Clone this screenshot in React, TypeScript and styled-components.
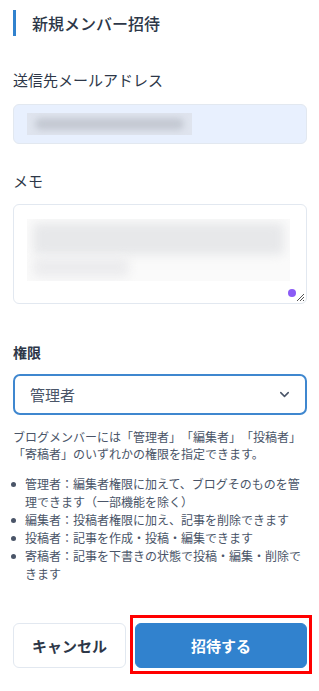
import React from "react"
import styled, {createGlobalStyle} from "styled-components"
import {ChevronDown} from "lucide-react"

const GlobalStyle = createGlobalStyle`
  body {
    margin: 0;
    background: #fff;
    font-family: "Noto Sans CJK JP", "Noto Sans", sans-serif;
    color: #2d3748;
    text-spacing-trim: space-all;
  }
`

const Page = styled.div`
  width: 319px;
  box-sizing: border-box;
  padding: 10px 12px 0 13px;
  display: flex;
  flex-direction: column;
`

const Heading = styled.h2`
  margin: 0;
  height: 26px;
  border-left: 3px solid #3182ce;
  padding-left: 16px;
  font-size: 16px;
  line-height: 26px;
  font-weight: 500;
  color: #2d3748;
`

const Label = styled.label<{$bold?: boolean; $top: number}>`
  display: block;
  margin-top: ${(p) => p.$top}px;
  font-size: ${(p) => (p.$bold ? 14 : 15)}px;
  line-height: ${(p) => (p.$bold ? 20 : 22)}px;
  font-weight: ${(p) => (p.$bold ? 700 : 400)};
  color: #2d3748;
`

const EmailField = styled.div`
  margin-top: 13px;
  height: 40px;
  box-sizing: border-box;
  border: 1px solid #e2e8f0;
  border-radius: 6px;
  background: #e8f0fe;
  display: flex;
  align-items: center;
  padding-left: 13px;
`

const BlurBox = styled.div<{$w: number; $h: number; $bg: string}>`
  width: ${(p) => p.$w}px;
  height: ${(p) => p.$h}px;
  background: ${(p) => p.$bg};
  overflow: hidden;
  position: relative;
`

const Smudge = styled.div<{$bg: string; $blur: number}>`
  background: ${(p) => p.$bg};
  filter: blur(${(p) => p.$blur}px);
  border-radius: 6px;
`

const MemoField = styled.div`
  margin-top: 12px;
  height: 100px;
  box-sizing: border-box;
  border: 1px solid #e2e8f0;
  border-radius: 6px;
  background: #fff;
  padding: 14px 15px 0 13px;
  position: relative;
`

const AssistDot = styled.span`
  position: absolute;
  right: 10px;
  bottom: 6px;
  width: 8px;
  height: 8px;
  border-radius: 50%;
  background: #8b5cf6;
`

const ResizeGrip = styled.svg`
  position: absolute;
  right: 1px;
  bottom: 1px;
`

const Select = styled.div`
  margin-top: 12px;
  height: 41px;
  box-sizing: border-box;
  border: 2px solid #3f87cf;
  border-radius: 7px;
  display: flex;
  align-items: center;
  justify-content: space-between;
  padding: 0 13px 0 15px;
  font-size: 15px;
  color: #4a5568;
`

const Help = styled.p`
  margin: 13px 0 0;
  font-size: 12px;
  line-height: 17px;
  color: #4a5568;
`

const RoleList = styled.ul`
  margin: 13px 0 0;
  padding-left: 12px;
  font-size: 12px;
  line-height: 18px;
  color: #4a5568;
  list-style: none;

  li {
    position: relative;
  }
  li::before {
    content: "";
    position: absolute;
    left: -14px;
    top: 7px;
    width: 5px;
    height: 5px;
    border-radius: 50%;
    background: #4a5568;
  }
`

const Actions = styled.div`
  margin-top: 32px;
  display: flex;
  align-items: flex-start;
  gap: 4px;
`

const Button = styled.button<{$primary?: boolean}>`
  flex-shrink: 0;
  height: 45px;
  box-sizing: border-box;
  border-radius: 6px;
  font-family: inherit;
  font-size: 15px;
  font-weight: 700;
  cursor: pointer;
  border: 1px solid ${(p) => (p.$primary ? "#3182ce" : "#e2e8f0")};
  background: ${(p) => (p.$primary ? "#3182ce" : "#fff")};
  color: ${(p) => (p.$primary ? "#fff" : "#2d3748")};
`

const CancelButton = styled(Button)`
  width: 113px;
  margin-top: 8px;
`

const Highlight = styled.div`
  flex-shrink: 0;
  border: 3px solid #ff0000;
  padding: 5px 2px 3px 2px;
  display: flex;
`

const InviteButton = styled(Button)`
  width: 172px;
`

const roles = [
  "管理者：編集者権限に加えて、ブログそのものを管理できます（一部機能を除く）",
  "編集者：投稿者権限に加え、記事を削除できます",
  "投稿者：記事を作成・投稿・編集できます",
  "寄稿者：記事を下書きの状態で投稿・編集・削除できます"
]

export default function App() {
  return (
    <>
      <GlobalStyle />
      <Page>
        <Heading>新規メンバー招待</Heading>

        <Label $top={33}>送信先メールアドレス</Label>
        <EmailField>
          <BlurBox $w={165} $h={22} $bg="#dfe4ee">
            <Smudge
              $bg="#c4c9d3"
              $blur={3}
              style={{margin: "5px 8px", height: 12}}
            />
          </BlurBox>
        </EmailField>

        <Label $top={26}>メモ</Label>
        <MemoField>
          <BlurBox $w={263} $h={62} $bg="#fafafa">
            <Smudge
              $bg="#e7e8ea"
              $blur={5}
              style={{margin: "4px 6px 0", height: 32}}
            />
            <Smudge
              $bg="#ececee"
              $blur={5}
              style={{margin: "2px 0 0 6px", height: 20, width: 96}}
            />
          </BlurBox>
          <AssistDot />
          <ResizeGrip width="10" height="10" viewBox="0 0 10 10">
            <path d="M9 2 L2 9 M9 5 L5 9 M9 8 L8 9" stroke="#555" strokeWidth="1" />
          </ResizeGrip>
        </MemoField>

        <Label $top={38} $bold>
          権限
        </Label>
        <Select>
          <span>管理者</span>
          <ChevronDown size={15} strokeWidth={2.4} color="#4a5568" />
        </Select>

        <Help>
          ブログメンバーには「管理者」「編集者」「投稿者」「寄稿者」のいずれかの権限を指定できます。
        </Help>

        <RoleList>
          {roles.map((r) => (
            <li key={r}>{r}</li>
          ))}
        </RoleList>

        <Actions>
          <CancelButton>キャンセル</CancelButton>
          <Highlight>
            <InviteButton $primary>招待する</InviteButton>
          </Highlight>
        </Actions>
      </Page>
    </>
  )
}
